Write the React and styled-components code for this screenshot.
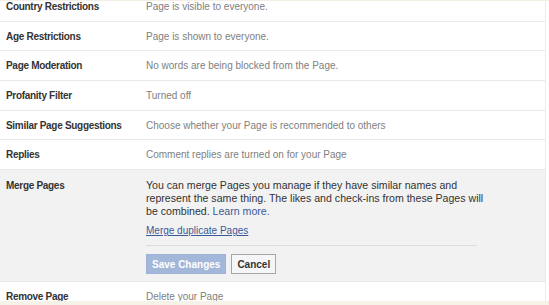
import React from "react";
import styled, { createGlobalStyle } from "styled-components";

const Global = createGlobalStyle`
  html, body { margin: 0; padding: 0; background: #ffffff; }
  body { font-family: "Liberation Sans", Arial, sans-serif; font-size: 10px; }
`;

const Frame = styled.div`
  width: 549px;
  height: 305px;
  display: flex;
  flex-direction: column;
  border-top: 1px solid #f3efe6;
  box-sizing: border-box;
  overflow: hidden;
`;

const Panel = styled.div`
  width: 546px;
  height: 300px;
  flex: none;
  overflow: hidden;
  border-right: 1px solid #ececec;
  box-sizing: border-box;
  background: #fff;
`;

const List = styled.div`
  margin-top: -9px;
  display: flex;
  flex-direction: column;
`;

const Row = styled.div`
  display: grid;
  grid-template-columns: 140px 1fr;
  align-items: start;
  padding: ${(p) => (p.$expanded ? "9px 0 7px 6px" : "8px 0 6.7px 6px")};
  line-height: 14px;
  border-bottom: 1px solid ${(p) => (p.$last ? "transparent" : "#e9e9e9")};
  background: ${(p) => (p.$expanded ? "#f2f2f2" : "#fff")};
`;

const Label = styled.div`
  font-weight: bold;
  font-size: 10px;
  letter-spacing: -0.3px;
  color: #333;
  line-height: ${(p) => (p.$expanded ? "13px" : "14px")};
`;

const Value = styled.div`
  color: #808080;
  font-size: 10px;
`;

const Editor = styled.div`
  width: 331px;
  display: flex;
  flex-direction: column;
`;

const Desc = styled.div`
  color: #333;
  font-size: 10.6px;
  line-height: 13px;
  width: 345px;
`;

const Link = styled.a`
  color: #3b5998;
  text-decoration: ${(p) => (p.$underline ? "underline" : "none")};
  cursor: pointer;
`;

const LinkLine = styled.div`
  margin-top: 6px;
  line-height: 13px;
  font-size: 10px;
  padding-bottom: 8px;
  border-bottom: 1px solid #dcdcdc;
`;

const Buttons = styled.div`
  display: flex;
  gap: 5px;
  margin-top: 8px;
`;

const Button = styled.button`
  font-family: "Liberation Sans", Arial, sans-serif;
  font-size: 10px;
  font-weight: bold;
  height: 20px;
  padding: 0 5px;
  border: 1px solid ${(p) => (p.$primary ? "#9fb2d6" : "#a6a6a6")};
  background: ${(p) => (p.$primary ? "#a2b7da" : "#f5f6f7")};
  color: ${(p) => (p.$primary ? "#fff" : "#333")};
  box-sizing: border-box;
  cursor: pointer;
`;

const Footer = styled.div`
  flex: 1;
  background: #f5f2ea;
`;

const rows = [
  ["Country Restrictions", "Page is visible to everyone."],
  ["Age Restrictions", "Page is shown to everyone."],
  ["Page Moderation", "No words are being blocked from the Page."],
  ["Profanity Filter", "Turned off"],
  ["Similar Page Suggestions", "Choose whether your Page is recommended to others"],
  ["Replies", "Comment replies are turned on for your Page"],
];

export default function App() {
  return (
    <>
      <Global />
      <Frame>
        <Panel>
          <List>
            {rows.map(([l, v]) => (
              <Row key={l}>
                <Label>{l}</Label>
                <Value>{v}</Value>
              </Row>
            ))}
            <Row $expanded>
              <Label $expanded>Merge Pages</Label>
              <Editor>
                <Desc>
                  You can merge Pages you manage if they have similar names and
                  represent the same thing. The likes and check-ins from these Pages will
                  be combined. <Link>Learn more.</Link>
                </Desc>
                <LinkLine>
                  <Link $underline>Merge duplicate Pages</Link>
                </LinkLine>
                <Buttons>
                  <Button $primary>Save Changes</Button>
                  <Button>Cancel</Button>
                </Buttons>
              </Editor>
            </Row>
            <Row $last>
              <Label>Remove Page</Label>
              <Value>Delete your Page</Value>
            </Row>
          </List>
        </Panel>
        <Footer />
      </Frame>
    </>
  );
}
